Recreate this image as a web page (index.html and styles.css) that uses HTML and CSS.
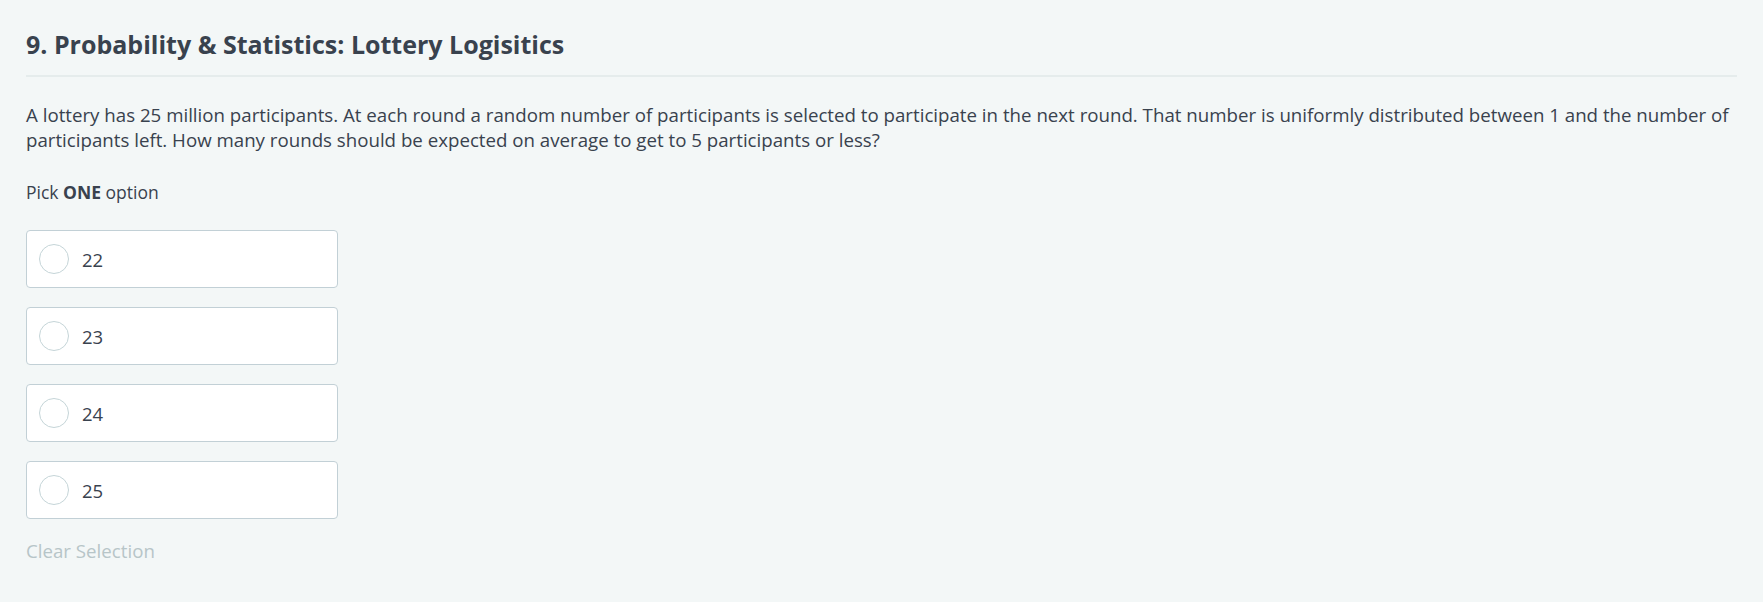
FILE: index.html
```html
<!DOCTYPE html>
<html>
<head>
<meta charset="utf-8">
<link rel="stylesheet" href="styles.css">
</head>
<body>
<div class="question">
  <h1 class="q-title">9. Probability &amp; Statistics: Lottery Logisitics</h1>
  <p class="q-text">A lottery has 25 million participants. At each round a random number of participants is selected to participate in the next round. That number is uniformly distributed between 1 and the number of participants left. How many rounds should be expected on average to get to 5 participants or less?</p>
  <p class="q-hint">Pick <strong>ONE</strong> option</p>
  <div class="options">
    <label class="option"><span class="radio"></span><span class="opt-label">22</span></label>
    <label class="option"><span class="radio"></span><span class="opt-label">23</span></label>
    <label class="option"><span class="radio"></span><span class="opt-label">24</span></label>
    <label class="option"><span class="radio"></span><span class="opt-label">25</span></label>
  </div>
  <div class="clear">Clear Selection</div>
</div>
</body>
</html>
```
FILE: styles.css
```css
html, body {
  margin: 0;
  padding: 0;
  background: #f3f7f7;
}
body {
  font-family: "Open Sans", "Liberation Sans", sans-serif;
  color: #39424e;
}
.question {
  padding: 27px 26px 0 26px;
}
.q-title {
  margin: 0;
  font-size: 25px;
  font-weight: 700;
  line-height: 34px;
  padding-bottom: 14px;
  border-bottom: 2px solid #e5ecec;
}
.q-text {
  margin: 25px 0 0 0;
  font-size: 18.7px;
  line-height: 25px;
}
.q-hint {
  margin: 28px 0 0 0;
  font-size: 17.5px;
  line-height: 25px;
}
.q-hint strong {
  font-weight: 700;
}
.options {
  display: flex;
  flex-direction: column;
  gap: 19px;
  margin-top: 25px;
}
.option {
  display: flex;
  align-items: center;
  width: 312px;
  height: 58px;
  box-sizing: border-box;
  padding: 0 12px;
  background: #fff;
  border: 1px solid #c2d0d6;
  border-radius: 4px;
}
.radio {
  width: 30px;
  height: 30px;
  box-sizing: border-box;
  border: 1px solid #c5d5d8;
  border-radius: 50%;
  flex: none;
}
.opt-label {
  margin-left: 13px;
  font-size: 18.5px;
}
.clear {
  margin-top: 19px;
  font-size: 18.7px;
  line-height: 25px;
  color: #b7c5c8;
}
```
